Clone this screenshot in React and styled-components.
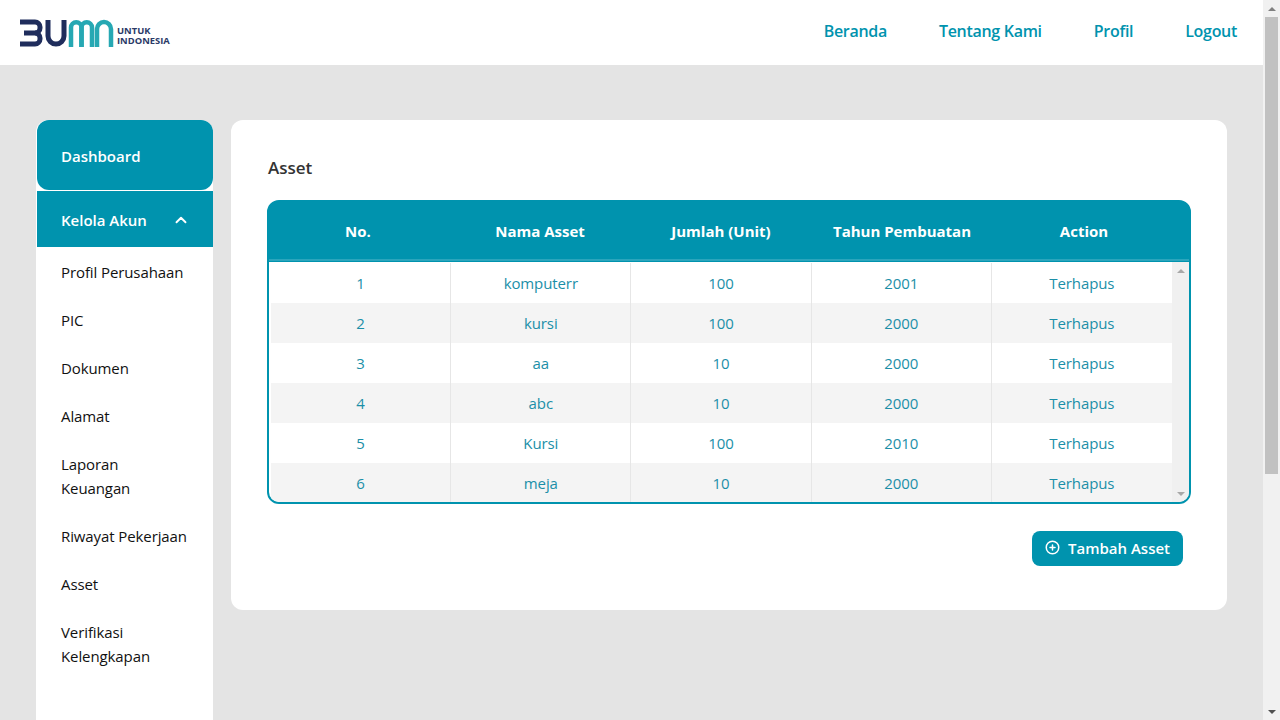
import React from 'react';
import styled, { createGlobalStyle } from 'styled-components';
import { ChevronUp, CirclePlus } from 'lucide-react';

const TEAL = '#0093ae';

const Global = createGlobalStyle`
  html, body { margin: 0; padding: 0; height: 720px; overflow: hidden; }
  body { font-family: "Open Sans", "Noto Sans", sans-serif; background: #e4e4e4; }
  * { box-sizing: border-box; }
`;

const Shell = styled.div`
  display: flex;
  width: 1280px;
  height: 720px;
  overflow: hidden;
`;
const Page = styled.div`
  flex: 1;
  min-width: 0;
  display: flex;
  flex-direction: column;
  background: #e4e4e4;
`;
const Scrollbar = styled.div`
  width: ${p => p.$w}px;
  flex: none;
  background: #f1f1f1;
  display: flex;
  flex-direction: column;
  align-items: center;
  align-self: stretch;
`;
const Arrow = styled.span`
  flex: none;
  width: 100%;
  height: ${p => p.$h}px;
  display: flex;
  align-items: center;
  justify-content: center;
  &::before {
    content: '';
    width: 0;
    height: 0;
    border-left: ${p => p.$s}px solid transparent;
    border-right: ${p => p.$s}px solid transparent;
    ${p => (p.$down ? 'border-top' : 'border-bottom')}: ${p => p.$s}px solid ${p => p.$c};
  }
`;
const Track = styled.div`
  flex: 1;
  width: 100%;
  display: flex;
  flex-direction: column;
`;
const Thumb = styled.div`
  height: 457px;
  margin: 0 2px;
  background: #c1c1c1;
`;

const Header = styled.header`
  height: 65px;
  flex: none;
  background: #fff;
  display: flex;
  align-items: center;
  justify-content: space-between;
  padding: 0 26px 0 20px;
`;
const Logo = styled.div`
  display: flex;
  align-items: center;
  gap: 1px;
`;
const LogoText = styled.div`
  font-family: "Open Sans", sans-serif;
  font-size: 9.4px;
  line-height: 10px;
  font-weight: 700;
  color: #2b3a67;
  margin-top: 6px;
`;
const Nav = styled.nav`
  display: flex;
  gap: 52px;
  padding-bottom: 4px;
`;
const NavLink = styled.a`
  font-size: 16px;
  font-weight: 600;
  color: ${TEAL};
  letter-spacing: -0.3px;
`;

const Body = styled.div`
  flex: 1;
  display: flex;
  align-items: flex-start;
  gap: 18px;
  padding: 55px 36px 0 36px;
  min-height: 0;
`;
const Sidebar = styled.aside`
  width: 177px;
  flex: none;
  height: 600px;
  padding-left: 1px;
  background: #fff;
  border-radius: 12px 12px 0 0;
`;
const DashItem = styled.div`
  height: 70px;
  background: ${TEAL};
  border-radius: 12px;
  display: flex;
  align-items: center;
  padding: 2px 0 0 24px;
  color: #fff;
  font-size: 15px;
  font-weight: 600;
  margin-bottom: 1px;
`;
const GroupItem = styled.div`
  height: 56px;
  background: ${TEAL};
  display: flex;
  align-items: center;
  justify-content: space-between;
  padding: 2px 23px 0 24px;
  color: #fff;
  font-size: 15px;
  font-weight: 600;
`;
const SubItem = styled.div`
  padding: 13px 24px 11px;
  font-size: 15px;
  line-height: 24px;
  letter-spacing: -0.1px;
  color: #111;
`;

const Card = styled.main`
  flex: 1;
  height: 490px;
  background: #fff;
  border-radius: 12px;
  padding: 35px 36px 0;
  display: flex;
  flex-direction: column;
`;
const Title = styled.h2`
  margin: 0 0 20px 1px;
  font-size: 17px;
  line-height: 25px;
  font-weight: 600;
  color: #333;
`;
const TableBox = styled.div`
  height: 304px;
  background: ${TEAL};
  border: 2px solid ${TEAL};
  border-radius: 12px;
  overflow: hidden;
  display: flex;
  flex-direction: column;
`;
const HeadRow = styled.div`
  flex: none;
  height: 61px;
  margin: -2px -2px 0;
  padding-top: 3px;
  background: ${TEAL};
  border-bottom: 2px solid #2ba5bc;
  display: grid;
  grid-template-columns: 182px 182px 180px 182px 182px;
  align-items: center;
`;
const HeadCell = styled.div`
  text-align: center;
  color: #fff;
  font-size: 15px;
  font-weight: 700;
`;
const ScrollArea = styled.div`
  flex: 1;
  min-height: 0;
  margin-top: 1px;
  background: #fff;
  display: flex;
`;
const Rows = styled.div`
  flex: 1;
  min-width: 0;
  padding: 1px 0 0 2px;
  overflow: hidden;
`;
const Row = styled.div`
  height: 40px;
  display: grid;
  grid-template-columns: repeat(5, 1fr);
  background: ${p => (p.$odd ? '#f4f4f4' : '#fff')};
`;
const Cell = styled.div`
  display: flex;
  align-items: center;
  justify-content: center;
  font-size: 15px;
  letter-spacing: -0.1px;
  color: #1b8fa8;
  border-right: 1px solid #e6e6e6;
  &:last-child { border-right: 0; }
`;
const InnerBar = styled(Scrollbar)`
  background: #f0f0f0;
  justify-content: space-between;
`;
const Actions = styled.div`
  display: flex;
  justify-content: flex-end;
  padding: 27px 8px 0 0;
`;
const AddButton = styled.button`
  height: 35px;
  width: 151px;
  border: 0;
  border-radius: 8px;
  background: ${TEAL};
  color: #fff;
  font-family: inherit;
  font-size: 15px;
  font-weight: 600;
  display: flex;
  align-items: center;
  justify-content: center;
  gap: 8px;
  padding: 0 0 2px;
`;

const menu = ['Profil Perusahaan', 'PIC', 'Dokumen', 'Alamat', 'Laporan Keuangan', 'Riwayat Pekerjaan', 'Asset', 'Verifikasi Kelengkapan'];
const rows = [
  [1, 'komputerr', 100, 2001],
  [2, 'kursi', 100, 2000],
  [3, 'aa', 10, 2000],
  [4, 'abc', 10, 2000],
  [5, 'Kursi', 100, 2010],
  [6, 'meja', 10, 2000],
];

const BumnLogo = () => (
  <svg width="96" height="28" viewBox="0 0 96 28" fill="none" aria-hidden="true">
    <g stroke="#1f2d5c" strokeWidth="5" fill="none">
      <path d="M0 3H15a5 5 0 0 1 5 5v1a5 5 0 0 1-5 5H4" />
      <path d="M15 14a5 5 0 0 1 5 5v1a5 5 0 0 1-5 5H0" />
      <path d="M28 1V17a8 8 0 0 0 16 0V1" />
    </g>
    <g stroke="#26a8b3" strokeWidth="4.500" fill="none">
      <path d="M51 28V8.500a5.250 5.250 0 0 1 10.500 0V28" />
      <path d="M61.500 28V8.500a5.250 5.250 0 0 1 10.500 0V28" />
      <path d="M77 28V10a7 7 0 0 1 14 0V28" />
    </g>
  </svg>
);

export default function App() {
  return (
    <Shell>
      <Global />
      <Page>
        <Header>
          <Logo>
            <BumnLogo />
            <LogoText>UNTUK<br />INDONESIA</LogoText>
          </Logo>
          <Nav>
            <NavLink>Beranda</NavLink>
            <NavLink>Tentang Kami</NavLink>
            <NavLink>Profil</NavLink>
            <NavLink>Logout</NavLink>
          </Nav>
        </Header>
        <Body>
          <Sidebar>
            <DashItem>Dashboard</DashItem>
            <GroupItem>Kelola Akun <ChevronUp size={18} strokeWidth={2.5} /></GroupItem>
            {menu.map(m => <SubItem key={m}>{m}</SubItem>)}
          </Sidebar>
          <Card>
            <Title>Asset</Title>
            <TableBox>
              <HeadRow>
                {['No.', 'Nama Asset', 'Jumlah (Unit)', 'Tahun Pembuatan', 'Action'].map(h => <HeadCell key={h}>{h}</HeadCell>)}
              </HeadRow>
              <ScrollArea>
                <Rows>
                  {rows.map((r, i) => (
                    <Row key={r[0]} $odd={i % 2 === 1}>
                      {r.map((c, j) => <Cell key={j}>{c}</Cell>)}
                      <Cell>Terhapus</Cell>
                    </Row>
                  ))}
                </Rows>
                <InnerBar $w={17}>
                  <Arrow $h={17} $s={4} $c="#a8a8a8" />
                  <Arrow $h={17} $s={4} $c="#a8a8a8" $down />
                </InnerBar>
              </ScrollArea>
            </TableBox>
            <Actions>
              <AddButton><CirclePlus size={15} strokeWidth={2.4} /> Tambah Asset</AddButton>
            </Actions>
          </Card>
        </Body>
      </Page>
      <Scrollbar $w={17}>
        <Arrow $h={17} $s={4} $c="#808080" />
        <Track><Thumb /></Track>
        <Arrow $h={17} $s={4} $c="#505050" $down />
      </Scrollbar>
    </Shell>
  );
}
